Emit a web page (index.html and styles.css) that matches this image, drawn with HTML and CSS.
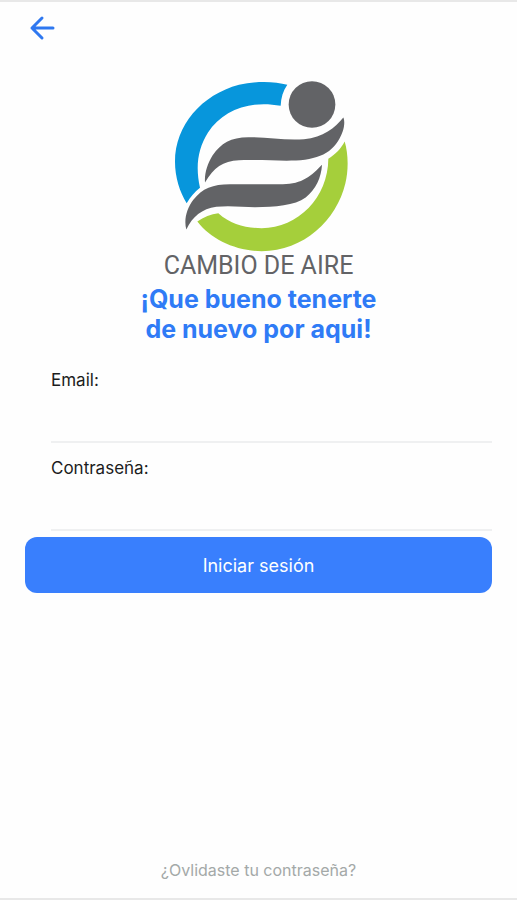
FILE: index.html
```html
<!DOCTYPE html>
<html lang="es">
<head>
<meta charset="utf-8">
<meta name="viewport" content="width=device-width, initial-scale=1">
<title>Cambio de Aire</title>
<link rel="stylesheet" href="styles.css">
</head>
<body>
<div class="screen">
  <header class="topbar">
    <a class="back" href="#" aria-label="Volver">
      <svg viewBox="0 0 26 26" width="26" height="26" aria-hidden="true"><path d="M24 13H3M13 3L3 13l10 10"/></svg>
    </a>
  </header>
  <main class="content">
    <div class="brand">
      <svg class="logo" viewBox="18 30 525 515" aria-hidden="true">
        <path class="blue" d="M367 44C330 33 270 32 222 44C110 74 30 165 30 275C30 320 44 366 65 399C76 381 89 365 105 353C91 290 98 237 129 187C172 121 254 89 347 107C348 83 354 62 367 44Z"/>
        <path class="green" d="M539 214C550 250 551 299 541 340C515 450 416 543 290 543C210 542 138 507 97 454C116 440 138 432 160 429C197 462 242 474 290 474C400 474 489 382 490 266C512 252 529 234 539 214Z"/>
        <circle class="gray" cx="441" cy="103" r="70"/>
        <path class="gray" d="M535 142C539 150 539 167 533 184C512 242 470 267 393 271C340 273 280 268 222 270C173 272 147 292 120 337C118 310 127 280 143 255C168 219 197 201 250 201C305 201 360 211 417 207C475 202 510 173 535 142Z"/>
        <path class="gray" d="M471 284C469 322 452 359 422 382C389 406 330 411 270 411C235 411 193 405 154 410C111 416 82 440 64 478C56 449 65 416 85 389C112 354 143 342 195 342H350C411 343 438 318 471 284Z"/>
      </svg>
      <p class="name">CAMBIO DE AIRE</p>
    </div>
    <h1 class="title">¡Que bueno tenerte<br>de nuevo por aqui!</h1>
    <form class="form">
      <div class="fields">
        <div class="field">
          <label for="email">Email:</label>
          <input id="email" type="email" autocomplete="email">
        </div>
        <div class="field">
          <label for="password">Contraseña:</label>
          <input id="password" type="password" autocomplete="current-password">
        </div>
      </div>
      <button class="submit" type="submit">Iniciar sesión</button>
    </form>
  </main>
  <footer class="footer"><a href="#">¿Ovlidaste tu contraseña?</a></footer>
</div>
</body>
</html>
```
FILE: styles.css
```css
* {
  box-sizing: border-box;
}

body {
  margin: 0;
  background: #fefefe;
  color: #1c1c1c;
  font-family: Inter, "Liberation Sans", sans-serif;
  font-size: 16px;
}

.screen {
  display: flex;
  flex-direction: column;
  min-height: 100vh;
  border-top: 2px solid #e8e8e8;
  border-bottom: 2px solid #e8e8e8;
}

.topbar {
  display: flex;
  padding: 13px 29px;
}

.back {
  display: flex;
}

.back svg {
  fill: none;
  stroke: #2f78f0;
  stroke-width: 3;
  stroke-linecap: round;
  stroke-linejoin: round;
}

.content {
  flex: 1;
  padding: 26px 25px 0;
}

.brand {
  display: flex;
  flex-direction: column;
  align-items: center;
}

.logo {
  width: 175px;
  height: 172px;
  overflow: visible;
}

.blue {
  fill: #0796dc;
}

.green {
  fill: #a5cf3b;
}

.gray {
  fill: #626366;
}

.name {
  margin: 0;
  color: #626366;
  font-family: Roboto, sans-serif;
  font-size: 25px;
  font-weight: 400;
  line-height: 28px;
}

.title {
  margin: 4px 0 0;
  color: #2f7bf6;
  font-size: 25px;
  font-weight: 700;
  line-height: 30px;
  text-align: center;
}

.form {
  display: flex;
  flex-direction: column;
  gap: 6px;
  padding-top: 24px;
}

.fields {
  display: flex;
  flex-direction: column;
  gap: 13px;
  padding-left: 26px;
}

.field {
  display: flex;
  flex-direction: column;
}

.field label {
  font-size: 17px;
  line-height: 24px;
}

.field input {
  height: 51px;
  padding: 0;
  border: 0;
  border-bottom: 2px solid #eff0f1;
  outline: 0;
  background: transparent;
  font: inherit;
}

.submit {
  height: 56px;
  border: 0;
  border-radius: 12px;
  background: #397ffd;
  color: #fff;
  font: inherit;
  font-size: 18px;
}

.footer {
  padding: 16px;
  line-height: 24px;
  text-align: center;
}

.footer a {
  color: #a4a9a8;
  text-decoration: none;
}
```
